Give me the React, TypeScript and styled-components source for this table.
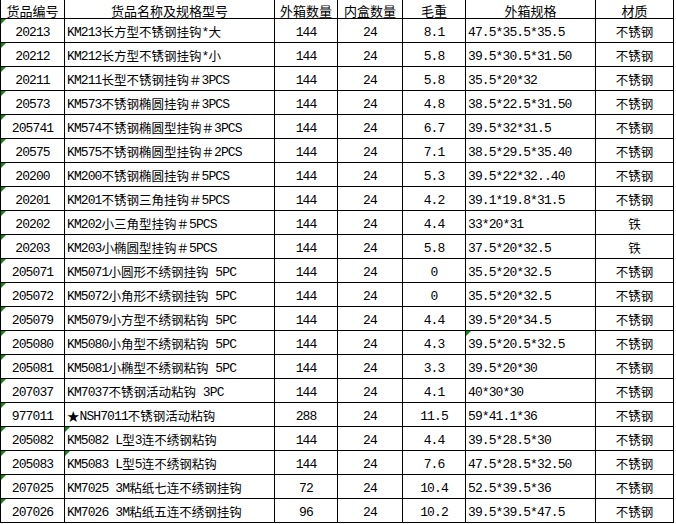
import React from "react";
import styled, { createGlobalStyle } from "styled-components";

const Global = createGlobalStyle`
  html, body { margin: 0; padding: 0; background: #fff; }
  body { font-family: "Noto Sans CJK SC", sans-serif; color: #000; }
`;

type Align = "left" | "center";

const columns: { title: string; width: number; align: Align }[] = [
  { title: "货品编号", width: 64, align: "center" },
  { title: "货品名称及规格型号", width: 210, align: "left" },
  { title: "外箱数量", width: 63, align: "center" },
  { title: "内盒数量", width: 65, align: "center" },
  { title: "毛重", width: 63, align: "center" },
  { title: "外箱规格", width: 130, align: "left" },
  { title: "材质", width: 78, align: "center" },
];

type Row = { cells: string[]; marks?: number[] };

const rows: Row[] = [
  { cells: ["20213", "KM213长方型不锈钢挂钩*大", "144", "24", "8.1", "47.5*35.5*35.5", "不锈钢"], marks: [0] },
  { cells: ["20212", "KM212长方型不锈钢挂钩*小", "144", "24", "5.8", "39.5*30.5*31.50", "不锈钢"], marks: [0] },
  { cells: ["20211", "KM211长型不锈钢挂钩＃3PCS", "144", "24", "5.8", "35.5*20*32", "不锈钢"], marks: [0] },
  { cells: ["20573", "KM573不锈钢椭圆挂钩＃3PCS", "144", "24", "4.8", "38.5*22.5*31.50", "不锈钢"], marks: [0] },
  { cells: ["205741", "KM574不锈钢椭圆型挂钩＃3PCS", "144", "24", "6.7", "39.5*32*31.5", "不锈钢"], marks: [0] },
  { cells: ["20575", "KM575不锈钢椭圆型挂钩＃2PCS", "144", "24", "7.1", "38.5*29.5*35.40", "不锈钢"], marks: [0] },
  { cells: ["20200", "KM200不锈钢椭圆挂钩＃5PCS", "144", "24", "5.3", "39.5*22*32..40", "不锈钢"], marks: [0] },
  { cells: ["20201", "KM201不锈钢三角挂钩＃5PCS", "144", "24", "4.2", "39.1*19.8*31.5", "不锈钢"], marks: [0] },
  { cells: ["20202", "KM202小三角型挂钩＃5PCS", "144", "24", "4.4", "33*20*31", "铁"], marks: [0] },
  { cells: ["20203", "KM203小椭圆型挂钩＃5PCS", "144", "24", "5.8", "37.5*20*32.5", "铁"], marks: [0] },
  { cells: ["205071", "KM5071小圆形不绣钢挂钩 5PC", "144", "24", "0", "35.5*20*32.5", "不锈钢"], marks: [0] },
  { cells: ["205072", "KM5072小角形不绣钢挂钩 5PC", "144", "24", "0", "35.5*20*32.5", "不锈钢"], marks: [0] },
  { cells: ["205079", "KM5079小方型不绣钢粘钩 5PC", "144", "24", "4.4", "39.5*20*34.5", "不锈钢"], marks: [0] },
  { cells: ["205080", "KM5080小角型不绣钢粘钩 5PC", "144", "24", "4.3", "39.5*20.5*32.5", "不锈钢"], marks: [0, 5] },
  { cells: ["205081", "KM5081小椭型不绣钢粘钩 5PC", "144", "24", "3.3", "39.5*20*30", "不锈钢"], marks: [0] },
  { cells: ["207037", "KM7037不锈钢活动粘钩 3PC", "144", "24", "4.1", "40*30*30", "不锈钢"], marks: [0] },
  { cells: ["977011", "★NSH7011不锈钢活动粘钩", "288", "24", "11.5", "59*41.1*36", "不锈钢"], marks: [0] },
  { cells: ["205082", "KM5082 L型3连不绣钢粘钩", "144", "24", "4.4", "39.5*28.5*30", "不锈钢"], marks: [0, 1] },
  { cells: ["205083", "KM5083 L型5连不绣钢粘钩", "144", "24", "7.6", "47.5*28.5*32.50", "不锈钢"], marks: [0, 1] },
  { cells: ["207025", "KM7025 3M粘纸七连不绣钢挂钩", "72", "24", "10.4", "52.5*39.5*36", "不锈钢"], marks: [0] },
  { cells: ["207026", "KM7026 3M粘纸五连不绣钢挂钩", "96", "24", "10.2", "39.5*39.5*47.5", "不锈钢"], marks: [0] },
];

const Sheet = styled.div`
  display: grid;
  grid-template-columns: ${columns.map((c) => `${c.width}px`).join(" ")};
  grid-auto-rows: 24px;
  grid-template-rows: 19px;
  width: max-content;
  border-left: 1px solid #000;
`;

const Cell = styled.div<{ $align: Align; $header?: boolean }>`
  position: relative;
  box-sizing: border-box;
  display: flex;
  align-items: center;
  justify-content: ${(p) => (p.$align === "left" ? "flex-start" : "center")};
  padding: ${(p) => (p.$header ? "2px 0 0 0" : p.$align === "left" ? "4px 0 0 2px" : "4px 0 0 0")};
  border-right: 1px solid #000;
  border-bottom: 1px solid #000;
  font-size: ${(p) => (p.$header ? "13px" : "12.5px")};
  font-family: "Noto Sans CJK SC", sans-serif;
  white-space: nowrap;
  overflow: hidden;
  line-height: 1;
`;

const Latin = styled.span`
  font-family: "Liberation Mono", monospace;
  font-size: 13px;
  letter-spacing: -0.9px;
  white-space: pre;
`;

const Mark = styled.span`
  position: absolute;
  left: 0;
  top: 0;
  width: 0;
  height: 0;
  border-top: 5px solid #0c8a0c;
  border-right: 5px solid transparent;
`;

function renderText(text: string) {
  return text
    .split(/([\x20-\x7e]+)/)
    .filter((s) => s.length > 0)
    .map((s, i) => (/^[\x20-\x7e]+$/.test(s) ? <Latin key={i}>{s}</Latin> : <span key={i}>{s}</span>));
}

export default function App() {
  return (
    <>
      <Global />
      <Sheet>
        {columns.map((c) => (
          <Cell key={c.title} $align="center" $header>
            {c.title}
          </Cell>
        ))}
        {rows.map((r, ri) =>
          r.cells.map((text, ci) => (
            <Cell key={`${ri}-${ci}`} $align={columns[ci].align}>
              {r.marks?.includes(ci) && <Mark />}
              {renderText(text)}
            </Cell>
          ))
        )}
      </Sheet>
    </>
  );
}
